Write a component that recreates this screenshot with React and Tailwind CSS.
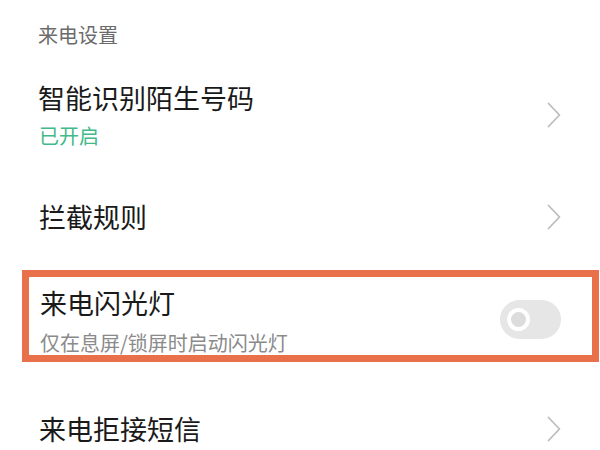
import React from "react";

const font = { fontFamily: '"Noto Sans CJK SC", "Noto Sans", sans-serif' };

function Chevron() {
  return (
    <svg width="16" height="26" viewBox="0 0 16 26" fill="none" className="shrink-0">
      <path d="M2.5 1.5 L13.5 13 L2.5 24.5" stroke="#bdbdbd" strokeWidth="1.8" strokeLinecap="round" strokeLinejoin="round" />
    </svg>
  );
}

function Toggle() {
  return (
    <div className="w-[61px] h-[39px] rounded-full bg-[#e6e6e6] flex items-center pl-[7px] shrink-0">
      <div className="w-[23px] h-[23px] rounded-full border-[4px] border-white bg-[#dcdcdc]" />
    </div>
  );
}

export default function App() {
  return (
    <div className="w-[600px] h-[450px] bg-white overflow-hidden" style={font}>
      <div className="pt-[25px] pl-[38px] text-[20px] leading-[20px] text-[#6b6b6b]">来电设置</div>

      <div className="mt-[39px] flex items-center pl-[38px] pr-[38px]">
        <div className="flex-1 flex flex-col">
          <div className="text-[27px] leading-[27px] text-[#1a1a1a]">智能识别陌生号码</div>
          <div className="mt-[15px] text-[20px] leading-[20px] text-[#42b98a] pl-[1px]">已开启</div>
        </div>
        <Chevron />
      </div>

      <div className="mt-[57px] flex items-center pl-[39px] pr-[38px]">
        <div className="flex-1 text-[27px] leading-[27px] text-[#1a1a1a]">拦截规则</div>
        <Chevron />
      </div>

      <div className="mt-[40px] ml-[22px] w-[577px] h-[92px] border-[7px] border-[#e8704a] flex items-start pl-[11px] pr-[31px]">
        <div className="flex-1 flex flex-col pt-[12px]">
          <div className="text-[27px] leading-[27px] text-[#1a1a1a]">来电闪光灯</div>
          <div className="mt-[17px] text-[20px] leading-[20px] text-[#8a8a8a]">仅在息屏/锁屏时启动闪光灯</div>
        </div>
        <div className="mt-[23px]">
          <Toggle />
        </div>
      </div>

      <div className="mt-[53px] flex items-center pl-[39px] pr-[38px]">
        <div className="flex-1 text-[27px] leading-[27px] text-[#1a1a1a]">来电拒接短信</div>
        <Chevron />
      </div>
    </div>
  );
}
